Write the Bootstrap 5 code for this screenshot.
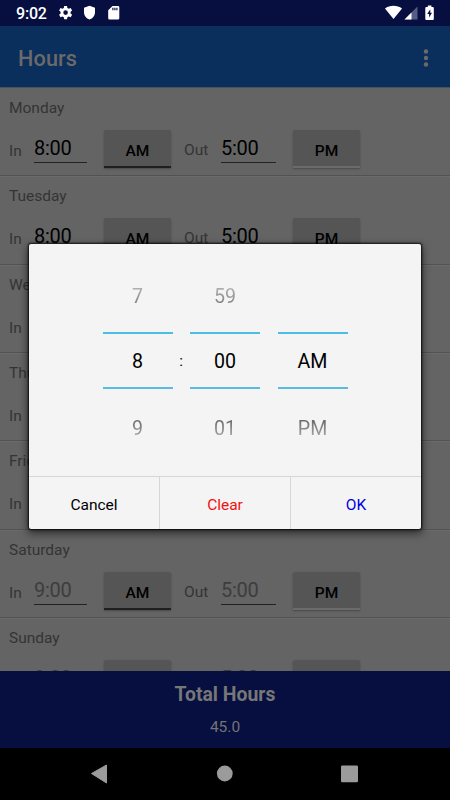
<!DOCTYPE html>
<html lang="en">
<head>
<meta charset="utf-8">
<meta name="viewport" content="width=device-width, initial-scale=1">
<title>Hours</title>
<link rel="stylesheet" href="https://cdn.jsdelivr.net/npm/bootstrap@5.3.0/dist/css/bootstrap.min.css">
<style>
body{font-family:Roboto,"Liberation Sans",sans-serif;font-size:15.5px;background:#646464;color:#343434;height:800px}
.screen{width:450px;height:800px}
.statusbar{height:26px;background:#060f40;color:#fff;padding:0 15px 0 16px}
.clock{font-size:16px;font-weight:500;line-height:26px;width:43px;letter-spacing:-.2px;padding-top:2px}
.appbar{height:61px;background:#0b2f5c;padding:4px 19px 0 18px;color:#6a6a6a}
.apptitle{font-size:21.7px;font-weight:500;letter-spacing:.1px;padding-top:1px}
.days{height:584px;border-top:1px solid #47525f}
.day{height:88.35px;border-bottom:1px solid #525252;padding:8px 9px 0;box-shadow:0 1px 0 #6b6b6b}
.dayname{line-height:24px;height:34px}
.lbl{line-height:20px;padding-top:10px}
.lbl-in{width:25px;padding-top:11px}
.lbl-out{width:37px;margin-left:13px}
.timefield{height:33px;border-bottom:1px solid #222;font-size:20px;line-height:37px;color:#000;letter-spacing:-.25px;width:53px;margin-right:17px}
.timefield.wide{width:55px}
.unset{color:#3d3d3d}
.toggle{width:67px;height:38px;background:#555;border-bottom:2px solid #1e2020;border-radius:2px 2px 0 0;font-size:15.5px;font-weight:500;color:#000;line-height:42px;box-shadow:0 1px 2px #0004}
.toggle.pm{border-bottom-color:#6b6b6b}
.total{height:77px;background:#060f40;color:#777;padding-top:9px}
.totaltitle{font-size:19.4px;font-weight:700;line-height:29px}
.totalvalue{line-height:24px;margin-top:6px;color:#747474}
.navkeys{height:52px;background:#000}
.picker{left:29px;top:244px;width:392px;height:285px;background:#f4f4f4;border-radius:2px;box-shadow:0 0 2px 1px #000c,0 3px 9px 1px #0009;color:#000}
.wheels{height:232px;padding:19px 0 0}
.wheel{width:70px;font-size:19.6px}
.near{height:69px;line-height:67px;color:transparent;-webkit-background-clip:text;background-clip:text}
.prev{background-image:linear-gradient(#bbb 30%,#666 72%)}
.current{height:57px;border-top:2px solid #4bbfe3;border-bottom:2px solid #5abbe0;line-height:56px}
.next.near{height:80px;line-height:80px;background-image:linear-gradient(#666 38%,#bbb 66%)}
.colon{width:17.5px;padding-top:86px;line-height:24px}
.actions{height:53px;border-top:1px solid #d6d6d6}
.action{line-height:56px;height:52px;border-right:1px solid #d6d6d6;letter-spacing:-.05px}
.action:last-child{border-right:0}
.clear{color:#f01010}.ok{color:#0000e6}
</style>
<script src="https://cdn.jsdelivr.net/npm/bootstrap@5.3.0/dist/js/bootstrap.bundle.min.js"></script>
</head>
<body class="m-0 overflow-hidden">
<div class="screen position-relative overflow-hidden d-flex flex-column">
  <header class="statusbar d-flex align-items-center flex-shrink-0">
    <span class="clock">9:02</span>
    <svg width="62" height="16" viewBox="0 0 62 16" fill="#fff">
      <path fill-rule="evenodd" d="M5.200.900h2.800l.4 2 1.400.8 1.900-.7 1.400 2.500-1.500 1.300v1.600l1.500 1.300-1.400 2.500-1.900-.7-1.400.8-.4 2H5.200l-.4-2-1.400-.8-1.900.7L.1 9.700l1.500-1.300V6.800L.1 5.500l1.400-2.500 1.900.7 1.400-.8zM6.600 5.300a2.300 2.300 0 1 0 0 4.600 2.300 2.300 0 0 0 0-4.600z"/>
      <path d="M30.500.700l5.500 2v4.600c0 3.400-2.300 6.200-5.500 7.300-3.200-1.100-5.500-3.900-5.500-7.300V2.700z"/>
      <path fill-rule="evenodd" d="M53.500 1h5.500q1.300 0 1.300 1.300v10.900q0 1.300-1.300 1.300h-8.500q-1.300 0-1.300-1.300V5.300zM53.300 2.800v2.400h1.200V2.800zm2 0v2.400h1.200V2.800zm2 0v2.400h1.200V2.800z"/>
    </svg>
    <svg class="ms-auto" width="50" height="16" viewBox="0 0 50 16" fill="#fff">
      <path d="M0 3.500C4.500-.1 12.500-.1 17 3.500L8.500 14z"/>
      <path d="M32.500 1.500v13h-13z" fill="#565c84"/>
      <path d="M26.500 7.500v7h-7z"/>
      <path fill-rule="evenodd" d="M42.800.500h3.600v1.400h1.400q1 0 1 1v11q0 1-1 1h-6.500q-1 0-1-1v-11q0-1 1-1h1.500zM45.300 4.300l-3.100 4.800h1.900v3.500L47 7.800h-1.700z"/>
    </svg>
  </header>
  <nav class="appbar d-flex align-items-center justify-content-between flex-shrink-0">
    <span class="apptitle">Hours</span>
    <svg width="10" height="20" viewBox="0 0 10 20" fill="#6a6a6a"><circle cx="5" cy="2.500" r="2.200"/><circle cx="5" cy="9" r="2.200"/><circle cx="5" cy="15.500" r="2.200"/></svg>
  </nav>
  <main class="days overflow-hidden flex-shrink-0" id="days"></main>
  <section class="total text-center flex-shrink-0">
    <div class="totaltitle">Total Hours</div>
    <div class="totalvalue">45.0</div>
  </section>
  <footer class="navkeys flex-shrink-0">
    <svg width="450" height="52" fill="#9b9b9b"><path d="M91.500 25.500L106.500 17v18z" stroke="#9b9b9b" stroke-width="1" stroke-linejoin="round"/><circle cx="224.800" cy="25.500" r="7.900"/><rect x="341" y="17.500" width="17" height="16.700" rx="1.200"/></svg>
  </footer>
  <div class="picker position-absolute" role="dialog" aria-label="Time">
    <div class="wheels d-flex justify-content-center text-center">
      <div class="wheel"><div class="near prev">7</div><div class="current">8</div><div class="near next">9</div></div>
      <div class="colon">:</div>
      <div class="wheel"><div class="near prev">59</div><div class="current">00</div><div class="near next">01</div></div>
      <div class="colon"></div>
      <div class="wheel"><div class="near prev"></div><div class="current">AM</div><div class="near next">PM</div></div>
    </div>
    <div class="actions d-flex text-center">
      <div class="action col">Cancel</div><div class="action col clear">Clear</div><div class="action col ok">OK</div>
    </div>
  </div>
</div>
<script>
const names=['Monday','Tuesday','Wednesday','Thursday','Friday','Saturday','Sunday'];
document.getElementById('days').innerHTML=names.map((n,i)=>{
  const off=i>4, c=off?' unset':'';
  return `<div class="day"><div class="dayname">${n}</div><div class="d-flex align-items-start">
  <div class="lbl lbl-in">In</div><div class="timefield${c}">${off?'9:00':'8:00'}</div><div class="toggle text-center">AM</div>
  <div class="lbl lbl-out">Out</div><div class="timefield wide${c}">5:00</div><div class="toggle pm text-center">PM</div></div></div>`;
}).join('');
</script>
</body>
</html>
